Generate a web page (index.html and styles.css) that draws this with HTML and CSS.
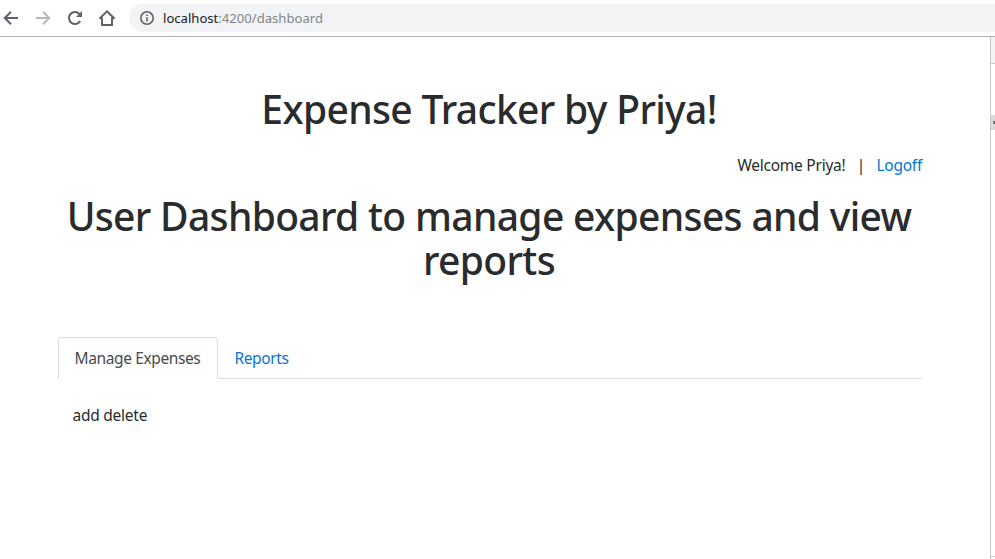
FILE: index.html
```html
<!DOCTYPE html>
<html lang="en">
<head>
<meta charset="utf-8">
<title>Expense Tracker</title>
<link rel="stylesheet" href="styles.css">
</head>
<body>
<header class="toolbar">
  <nav class="controls">
    <svg class="icon" viewBox="0 0 18 18"><path d="M16 9H3M9 2.7 2.7 9 9 15.3"/></svg>
    <svg class="icon icon-disabled" viewBox="0 0 18 18"><path d="M2 9h13M9 2.7 15.3 9 9 15.3"/></svg>
    <svg class="icon" viewBox="0 0 18 18"><path d="M14.2 12A6 6 0 1 1 13.4 4.9L15 6.5"/><path class="solid" d="M16 2v6h-6z"/></svg>
    <svg class="icon" viewBox="0 0 18 18"><path d="M1.4 9.8 9 2.4l7.6 7.4M4 8.5V16h10V8.5"/></svg>
  </nav>
  <div class="address">
    <svg class="info" viewBox="0 0 16 16"><circle cx="8" cy="8" r="6.2"/><path d="M8 7.2v4.2M8 4.5v1.6"/></svg>
    <span class="url"><span class="host">localhost</span>:4200/dashboard</span>
  </div>
</header>
<div class="viewport">
  <main class="page">
    <h1>Expense Tracker by Priya!</h1>
    <div class="account"><span class="welcome">Welcome Priya!</span><span class="divider">|</span><a class="logoff">Logoff</a></div>
    <h1 class="dashboard-title">User Dashboard to manage expenses and view reports</h1>
    <div class="tabs">
      <a class="tab active">Manage Expenses</a>
      <a class="tab">Reports</a>
    </div>
    <p class="panel">add delete</p>
  </main>
  <aside class="side">
    <div class="side-head"></div>
    <div class="side-body"></div>
    <div class="side-mark"></div>
    <div class="side-rest"></div>
    <div class="side-foot"></div>
  </aside>
</div>
</body>
</html>
```
FILE: styles.css
```css
* { box-sizing: border-box; }
body {
  margin: 0;
  height: 559px;
  overflow: hidden;
  display: flex;
  flex-direction: column;
  background: #fff;
  color: #292b2c;
  font: 15.5px/24px "Segoe UI", "Noto Sans", sans-serif;
  letter-spacing: -0.25px;
}
.toolbar {
  flex: none;
  display: flex;
  align-items: center;
  height: 37px;
  padding-left: 2px;
  border-bottom: 1px solid #b0b0b0;
}
.controls { display: flex; gap: 14px; }
.icon { width: 18px; height: 18px; fill: none; stroke: #5f6368; stroke-width: 2; }
.icon-disabled { stroke: #bababc; }
.icon .solid { fill: #5f6368; stroke: none; }
.address {
  flex: 1;
  display: flex;
  align-items: center;
  gap: 8px;
  height: 28px;
  margin-left: 13px;
  padding-left: 10px;
  border-radius: 14px 0 0 14px;
  background: #f1f3f4;
}
.info { width: 16px; height: 16px; fill: none; stroke: #5f6368; stroke-width: 1.6; }
.url { color: #80868b; font-size: 13.1px; letter-spacing: 0; }
.host { color: #202124; }
.viewport { flex: 1; display: flex; min-height: 0; }
.page { flex: 1; min-width: 0; padding: 50px 68px 0 58px; }
h1 {
  margin: 0 1px 0 -1px;
  font-size: 39px;
  line-height: 44px;
  font-weight: 500;
  letter-spacing: -0.66px;
  text-align: center;
}
.account { display: flex; justify-content: flex-end; margin-top: 22px; }
.divider { width: 31px; text-align: center; }
.logoff { color: #0275d8; }
.dashboard-title { margin-top: 17px; }
.tabs { display: flex; margin-top: 55px; border-bottom: 1px solid #ddd; }
.tab {
  height: 42px;
  margin-bottom: -1px;
  padding: 8px 16px 8px 15.5px;
  border: 1px solid transparent;
  border-radius: 4px 4px 0 0;
  color: #0275d8;
  white-space: nowrap;
  letter-spacing: -0.38px;
}
.active { width: 160px; color: #464a4c; background: #fff; border-color: #ddd #ddd #fff; }
.panel { margin: 24px 0 0; padding-left: 14.5px; }
.side { width: 5px; display: flex; flex-direction: column; border-left: 1px solid #c8c8c8; }
.side-head { height: 27px; background: #f3f3f3; border-bottom: 1px solid #ccc; }
.side-body { height: 51px; }
.side-mark { height: 15px; background: linear-gradient(#777, #777) right center / 2px 3px no-repeat #dadada; }
.side-rest { flex: 1; }
.side-foot { height: 3px; border-top: 1px solid #ccc; }
```
